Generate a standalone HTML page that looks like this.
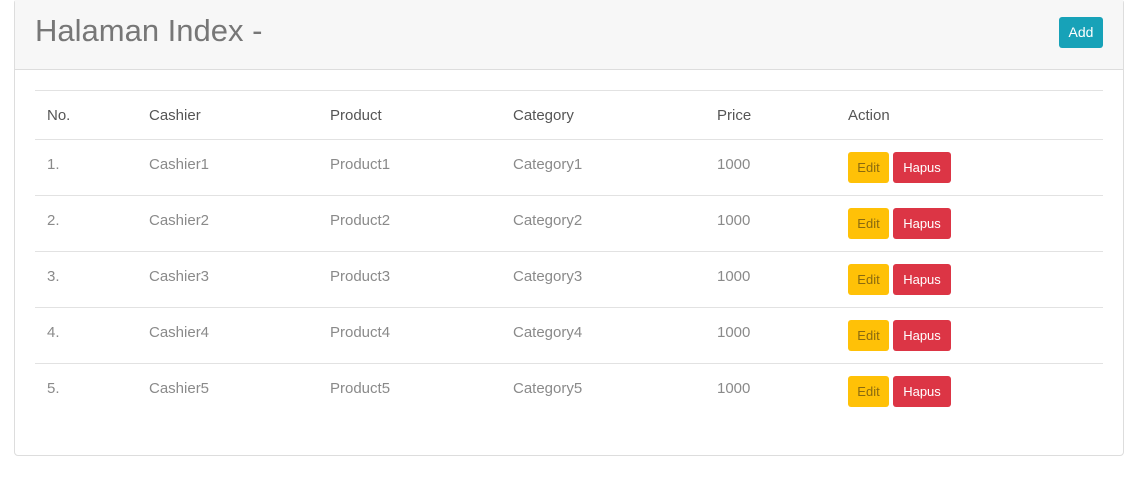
<!DOCTYPE html>
<html><head><style>
body{margin:0;background:#fff;font-family:"Liberation Sans",sans-serif;}
.card{position:absolute;left:14px;top:-1px;width:1108px;height:455px;border:1px solid #ddd;border-radius:4px;}
.hdr{position:absolute;left:0;top:0;width:1108px;height:69px;background:#f7f7f7;border-bottom:1px solid #ddd;}
h1{position:absolute;left:20px;top:13px;margin:0;font-weight:300;font-size:31px;color:#777;letter-spacing:0px;}
.add{position:absolute;left:1044px;top:17px;width:44px;height:31px;background:#17a2b8;color:#fff;border-radius:3px;font-size:14px;line-height:31px;text-align:center;}
.line{position:absolute;left:35px;width:1068px;height:1px;background:#e2e2e2;}
.t{position:absolute;font-size:15px;color:#8a8a8a;margin-top:1px;}
.th{color:#555;}
.btn{position:absolute;height:31px;line-height:31px;font-size:13px;border-radius:3px;text-align:center;}
.e{background:#ffc107;color:#8a6a10;width:41px;left:848px;}
.h{background:#dc3545;color:#fff;width:58px;left:893px;}
</style></head><body>
<div class="card"><div class="hdr"><h1>Halaman Index -</h1><div class="add">Add</div></div></div>
<div class="line" style="top:90px"></div>
<div class="t th" style="left:47px;top:106px">No.</div>
<div class="t th" style="left:149px;top:106px">Cashier</div>
<div class="t th" style="left:330px;top:106px">Product</div>
<div class="t th" style="left:513px;top:106px">Category</div>
<div class="t th" style="left:717px;top:106px">Price</div>
<div class="t th" style="left:848px;top:106px">Action</div>

<div class="line" style="top:139px"></div>
<div class="t" style="left:47px;top:155px">1.</div><div class="t" style="left:149px;top:155px">Cashier1</div><div class="t" style="left:330px;top:155px">Product1</div><div class="t" style="left:513px;top:155px">Category1</div><div class="t" style="left:717px;top:155px">1000</div>
<div class="btn e" style="top:152px">Edit</div><div class="btn h" style="top:152px">Hapus</div>

<div class="line" style="top:195px"></div>
<div class="t" style="left:47px;top:211px">2.</div><div class="t" style="left:149px;top:211px">Cashier2</div><div class="t" style="left:330px;top:211px">Product2</div><div class="t" style="left:513px;top:211px">Category2</div><div class="t" style="left:717px;top:211px">1000</div>
<div class="btn e" style="top:208px">Edit</div><div class="btn h" style="top:208px">Hapus</div>

<div class="line" style="top:251px"></div>
<div class="t" style="left:47px;top:267px">3.</div><div class="t" style="left:149px;top:267px">Cashier3</div><div class="t" style="left:330px;top:267px">Product3</div><div class="t" style="left:513px;top:267px">Category3</div><div class="t" style="left:717px;top:267px">1000</div>
<div class="btn e" style="top:264px">Edit</div><div class="btn h" style="top:264px">Hapus</div>

<div class="line" style="top:307px"></div>
<div class="t" style="left:47px;top:323px">4.</div><div class="t" style="left:149px;top:323px">Cashier4</div><div class="t" style="left:330px;top:323px">Product4</div><div class="t" style="left:513px;top:323px">Category4</div><div class="t" style="left:717px;top:323px">1000</div>
<div class="btn e" style="top:320px">Edit</div><div class="btn h" style="top:320px">Hapus</div>

<div class="line" style="top:363px"></div>
<div class="t" style="left:47px;top:379px">5.</div><div class="t" style="left:149px;top:379px">Cashier5</div><div class="t" style="left:330px;top:379px">Product5</div><div class="t" style="left:513px;top:379px">Category5</div><div class="t" style="left:717px;top:379px">1000</div>
<div class="btn e" style="top:376px">Edit</div><div class="btn h" style="top:376px">Hapus</div>
</body></html>
